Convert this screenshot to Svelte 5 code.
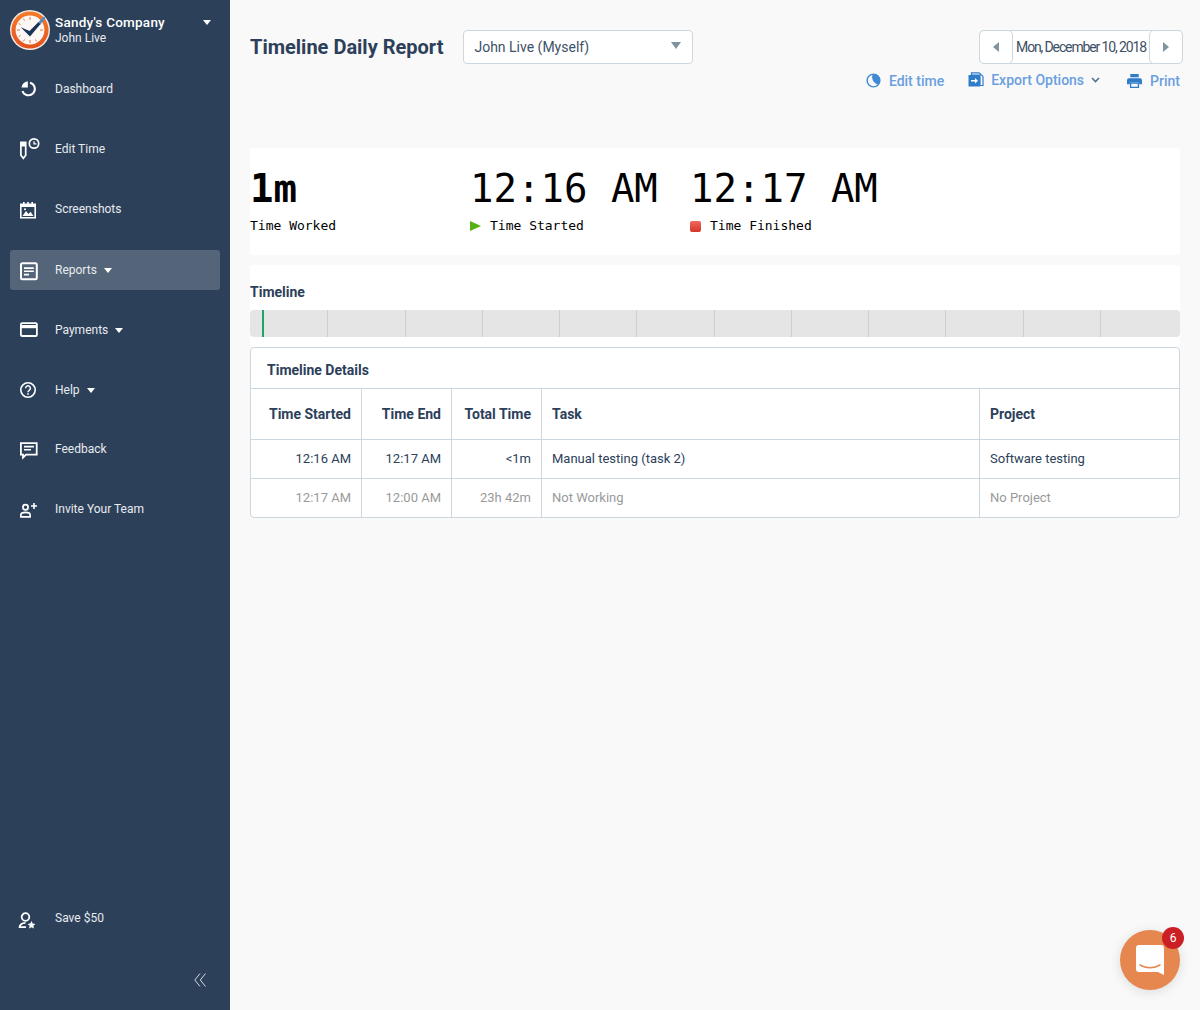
<script>
  const ticks = Array.from({ length: 12 });
  const rows = [
    { start: '12:16 AM', end: '12:17 AM', total: '<1m', task: 'Manual testing (task 2)', project: 'Software testing', muted: false },
    { start: '12:17 AM', end: '12:00 AM', total: '23h 42m', task: 'Not Working', project: 'No Project', muted: true }
  ];
</script>

<div class="page">
  <aside class="sidebar">
    <div class="brand">
      <svg class="logo" width="40" height="40" viewBox="0 0 40 40">
        <defs>
          <linearGradient id="ring" x1="0" y1="0" x2="0" y2="1">
            <stop offset="0" stop-color="#f47b2a" />
            <stop offset="1" stop-color="#e4521f" />
          </linearGradient>
        </defs>
        <circle cx="20" cy="20" r="20" fill="#f4ece6" />
        <circle cx="20" cy="20" r="18.600" fill="url(#ring)" />
        <circle cx="20" cy="20" r="14.400" fill="#fdf8f5" />
        <path d="M20 7v3M20 30v3M7 20h3M30 20h3M13.500 8.700l1 1.800M26.500 31.300l-1-1.800M8.700 26.500l1.800-1M31.300 13.500l-1.800 1M8.700 13.500l1.800 1M13.500 31.300l1-1.800" stroke="#e8743a" stroke-width="1" fill="none" />
        <path d="M10.700 17.300 L19.500 21 L28.500 12 L30.500 14 L20 26.500 Z" fill="#1c3358" />
        <path d="M28.500 12 L34 6.500 L35.500 8 L30.500 14 Z" fill="#3f8fd0" />
      </svg>
      <div class="brand-text">
        <div class="company">Sandy's Company</div>
        <div class="user">John Live</div>
      </div>
      <span class="caret brand-caret"></span>
    </div>

    <nav class="nav">
      <a class="item">
        <svg class="icon" viewBox="0 0 20 20"><path d="M8.800 2.300a7.500 7.500 0 0 0-6.300 6.200h6.300z" fill="#fff"/><path d="M11 3.700a6.400 6.400 0 1 1-7.600 8.300" fill="none" stroke="#fff" stroke-width="2"/></svg>
        <span>Dashboard</span>
      </a>
      <a class="item">
        <svg class="icon" viewBox="0 0 20 20" style="overflow:visible"><path d="M1.900 3.400h4.800v12.800L4.300 19.300 1.900 16.200z" fill="none" stroke="#fff" stroke-width="1.700"/><path d="M2 3.500h4.600v4H2z" fill="#fff"/><circle cx="15" cy="4.500" r="4.700" fill="none" stroke="#fff" stroke-width="1.700"/><path d="M15 2.300v2.500h2.400" fill="none" stroke="#fff" stroke-width="1.300"/></svg>
        <span>Edit Time</span>
      </a>
      <a class="item">
        <svg class="icon" viewBox="0 0 20 20"><path d="M1.800 6h14.400v12.800H1.800z" fill="none" stroke="#fff" stroke-width="1.600"/><path d="M1 4.500h16V8H1z" fill="#fff"/><path d="M4 3h1.600v2.500H4zM8.200 3h1.600v2.500H8.200zM12.400 3H14v2.500h-1.600z" fill="#fff"/><path d="M3.500 17l3.500-5 2.500 3 2-2.300 3 4.300z" fill="#fff"/><circle cx="6" cy="10.300" r="1" fill="#fff"/></svg>
        <span>Screenshots</span>
      </a>
      <a class="item active">
        <svg class="icon" viewBox="0 0 20 20" style="overflow:visible"><rect x="2" y="3.200" width="15.800" height="16" rx="1.500" fill="none" stroke="#fff" stroke-width="2"/><path d="M5 7.300h9.800v1.600H5zM5 10.500h9.800v1.600H5zM5 13.800h5v1.600H5z" fill="#fff"/></svg>
        <span>Reports</span><span class="caret"></span>
      </a>
      <a class="item">
        <svg class="icon" viewBox="0 0 20 20" style="overflow:visible"><rect x="1.900" y="3.200" width="16" height="12.800" rx="1.300" fill="none" stroke="#fff" stroke-width="1.800"/><path d="M2 5h15.800v3.200H2z" fill="#fff"/></svg>
        <span>Payments</span><span class="caret"></span>
      </a>
      <a class="item">
        <svg class="icon" viewBox="0 0 20 20"><circle cx="9" cy="10" r="7.200" fill="none" stroke="#fff" stroke-width="1.600"/><path d="M6.600 8.200a2.400 2.400 0 1 1 3.600 2.100c-.8.500-1.200 1-1.200 2" fill="none" stroke="#fff" stroke-width="1.500"/><path d="M8.200 13.200h1.600v1.600H8.200z" fill="#fff"/></svg>
        <span>Help</span><span class="caret"></span>
      </a>
      <a class="item feedback">
        <svg class="icon" viewBox="0 0 20 20" style="overflow:visible"><path d="M1.900 4.200h15.800v11.500H7l-3 3v-3H1.900z" fill="none" stroke="#fff" stroke-width="1.800"/><path d="M5 6.800h10v1.600H5zM5 9.900h7v1.600H5z" fill="#fff"/></svg>
        <span>Feedback</span>
      </a>
      <a class="item">
        <svg class="icon" viewBox="0 0 20 20"><circle cx="6.500" cy="8.300" r="2.600" fill="none" stroke="#fff" stroke-width="1.700"/><path d="M1.900 17.800v-2c0-1.300 2-2.400 4.600-2.400s4.600 1.100 4.600 2.400v2z" fill="none" stroke="#fff" stroke-width="1.700"/><path d="M12 6.200h2.200V4h1.600v2.200H18v1.600h-2.200V10h-1.600V7.800H12z" fill="#fff"/></svg>
        <span>Invite Your Team</span>
      </a>
    </nav>

    <div class="bottom">
      <a class="item save">
        <svg class="icon" viewBox="0 0 20 20" style="overflow:visible"><g transform="translate(-2 3.500)"><circle cx="8.500" cy="5.500" r="3.800" fill="none" stroke="#fff" stroke-width="1.800"/><path d="M2.500 16.500c0-3 2-5 6-5.200M2 15.700h7" fill="none" stroke="#fff" stroke-width="1.800"/><path d="M14.500 9.500l1.200 2.500 2.700.4-2 1.900.5 2.700-2.400-1.300-2.400 1.300.5-2.700-2-1.900 2.700-.4z" fill="#fff"/></g></svg>
        <span>Save $50</span>
      </a>
      <div class="collapse">
        <svg width="12" height="14" viewBox="0 0 12 14"><path d="M6 .5L.8 7 6 13.500M11.500.5L6.300 7l5.200 6.500" fill="none" stroke="#d5dbe2" stroke-width="1"/></svg>
      </div>
    </div>
  </aside>

  <main class="main">
    <header class="top">
      <h1>Timeline Daily Report</h1>
      <div class="select">
        <span>John Live (Myself)</span>
        <span class="select-arrow"></span>
      </div>
      <div class="date-nav">
        <button class="date-btn" aria-label="Previous day"><span class="tri left"></span></button>
        <span class="date">Mon, December 10, 2018</span>
        <button class="date-btn" aria-label="Next day"><span class="tri right"></span></button>
      </div>
    </header>

    <div class="actions">
      <a class="action edit">
        <svg width="15" height="15" viewBox="0 0 16 16"><circle cx="8" cy="8" r="6.800" fill="none" stroke="#3f8ad4" stroke-width="1.500"/><path d="M7 1.500A6.500 6.500 0 0 1 12.800 12.500 8.500 8.500 0 0 1 7 1.500z" fill="#3f8ad4"/></svg>
        <span>Edit time</span>
      </a>
      <a class="action export">
        <svg width="16" height="15" viewBox="0 0 16 15"><path d="M3.500 3V.8h7.700L15 4.400V13.500h-3V3z" fill="none" stroke="#2f7cc8" stroke-width="1.200"/><path d="M.5 3h11.500v11.500H.5z" fill="#2f7cc8"/><path d="M3 8h4V6l3 2.800-3 2.700V9.500H3z" fill="#fff"/></svg>
        <span>Export Options</span>
        <svg class="chev" width="9" height="6" viewBox="0 0 9 6"><path d="M1 1l3.500 3.500L8 1" fill="none" stroke="#55708f" stroke-width="1.600"/></svg>
      </a>
      <a class="action print">
        <svg width="15" height="14" viewBox="0 0 16 15"><path d="M3.500 0h9v3.500h-9z" fill="#2f7cc8"/><path d="M2 4.500h12a2 2 0 0 1 2 2V11h-3V9H3v2H0V6.500a2 2 0 0 1 2-2z" fill="#2f7cc8"/><path d="M3.800 9.700h8.400v4.600H3.800z" fill="none" stroke="#2f7cc8" stroke-width="1.400"/></svg>
        <span>Print</span>
      </a>
    </div>

    <section class="stats">
      <div class="stat">
        <div class="big bold">1m</div>
        <div class="label">Time Worked</div>
      </div>
      <div class="stat">
        <div class="big">12:16 AM</div>
        <div class="label"><span class="play"></span>Time Started</div>
      </div>
      <div class="stat">
        <div class="big">12:17 AM</div>
        <div class="label"><span class="stop"></span>Time Finished</div>
      </div>
    </section>

    <section class="timeline">
      <h2>Timeline</h2>
      <div class="bar">
        {#each ticks as _}
          <span class="seg"></span>
        {/each}
        <span class="marker"></span>
      </div>
    </section>

    <section class="details">
      <h3>Timeline Details</h3>
      <table>
        <colgroup>
          <col class="c1" /><col class="c2" /><col class="c3" /><col /><col class="c5" />
        </colgroup>
        <thead>
          <tr>
            <th class="r">Time Started</th>
            <th class="r">Time End</th>
            <th class="r">Total Time</th>
            <th>Task</th>
            <th>Project</th>
          </tr>
        </thead>
        <tbody>
          {#each rows as row}
            <tr class:muted={row.muted}>
              <td class="r">{row.start}</td>
              <td class="r">{row.end}</td>
              <td class="r">{row.total}</td>
              <td>{row.task}</td>
              <td>{row.project}</td>
            </tr>
          {/each}
        </tbody>
      </table>
    </section>
  </main>

  <div class="chat">
    <svg width="30" height="32" viewBox="0 0 30 32"><path d="M4 1h22a3 3 0 0 1 3 3v27l-6-3H4a3 3 0 0 1-3-3V4a3 3 0 0 1 3-3z" fill="#fff"/><path d="M5 21c6 3.500 14 3.500 20 0" fill="none" stroke="#e5874f" stroke-width="1.500" stroke-linecap="round"/></svg>
    <span class="badge">6</span>
  </div>
</div>

<style>
  :global(body) {
    margin: 0;
    background: #f9f9f9;
  }
  .page {
    display: flex;
    position: relative;
    width: 1200px;
    height: 1010px;
    overflow: hidden;
    font-family: Roboto, "Liberation Sans", sans-serif;
    color: #2c405a;
  }
  .sidebar {
    flex: 0 0 230px;
    display: flex;
    flex-direction: column;
    background: #2c405a;
    color: #e8ebef;
    box-sizing: border-box;
    padding: 10px 10px 0;
  }
  .brand {
    display: flex;
    align-items: center;
    height: 40px;
  }
  .logo {
    flex: none;
    margin-right: 5px;
  }
  .company {
    font-size: 13.500px;
    line-height: 16px;
    font-weight: 500;
    color: #fff;
    letter-spacing: .23px;
  }
  .user {
    font-size: 12px;
    line-height: 16px;
  }
  .caret {
    display: inline-block;
    width: 0;
    height: 0;
    margin-left: 7px;
    border-left: 4px solid transparent;
    border-right: 4px solid transparent;
    border-top: 5px solid #fff;
  }
  .brand-caret {
    align-self: flex-start;
    margin-left: auto;
    margin-right: 9px;
    margin-top: 10px;
  }
  .nav {
    display: flex;
    flex-direction: column;
    gap: 20px;
    margin-top: 19px;
  }
  .item {
    display: flex;
    align-items: center;
    height: 40px;
    border-radius: 3px;
    padding-left: 9px;
    font-size: 12px;
  }
  .item .icon {
    flex: none;
    width: 20px;
    height: 20px;
    margin-right: 16px;
  }
  .active {
    background: #556579;
    margin-top: 1px;
  }
  .feedback {
    margin-top: -1px;
  }
  .bottom {
    margin-top: auto;
  }
  .save {
    margin-bottom: 32px;
  }
  .collapse {
    display: flex;
    justify-content: flex-end;
    padding-right: 14px;
    height: 20px;
    margin-bottom: 20px;
    align-items: center;
  }
  .main {
    flex: 1;
    min-width: 0;
    box-sizing: border-box;
    padding: 30px 20px 0;
  }
  .top {
    display: flex;
    align-items: center;
    height: 34px;
    margin-right: -3px;
  }
  h1 {
    margin: 0 20px 0 0;
    font-size: 20px;
    font-weight: 700;
    color: #2c405a;
    white-space: nowrap;
  }
  .select {
    box-sizing: border-box;
    width: 230px;
    height: 34px;
    display: flex;
    align-items: center;
    justify-content: space-between;
    padding: 0 11px 0 10px;
    background: #fff;
    border: 1px solid #cdd8de;
    border-radius: 4px;
    font-size: 14px;
    color: #3d5168;
  }
  .select-arrow {
    width: 0;
    height: 0;
    border-left: 5px solid transparent;
    border-right: 5px solid transparent;
    border-top: 7px solid #7f949f;
    margin-top: -3px;
  }
  .date-nav {
    margin-left: auto;
    display: flex;
    align-items: center;
    width: 204px;
    height: 34px;
    box-sizing: border-box;
    border: 1px solid #cdd8de;
    border-radius: 5px;
    background: #fff;
  }
  .date-btn {
    flex: none;
    width: 34px;
    height: 34px;
    margin: -1px;
    padding: 0;
    display: flex;
    align-items: center;
    justify-content: center;
    background: #fff;
    border: 1px solid #cdd8de;
    border-radius: 5px;
  }
  .date {
    flex: 1;
    text-align: center;
    font-size: 14px;
    letter-spacing: -1.130px;
    white-space: nowrap;
    color: #3d4f63;
  }
  .tri {
    width: 0;
    height: 0;
    border-top: 5px solid transparent;
    border-bottom: 5px solid transparent;
  }
  .tri.left {
    border-right: 6px solid #7f949f;
    margin-left: -1px;
  }
  .tri.right {
    border-left: 6px solid #7f949f;
    margin-left: -1px;
  }
  .actions {
    display: flex;
    justify-content: flex-end;
    align-items: center;
    height: 20px;
    margin-top: 6px;
    font-size: 14px;
    font-weight: 500;
    color: #6a9fe0;
  }
  .action {
    display: flex;
    align-items: center;
    gap: 8px;
  }
  .edit {
    margin-right: 24px;
    margin-top: 1px;
  }
  .export {
    margin-right: 27px;
    margin-top: -1px;
    gap: 7px;
  }
  .print {
    margin-top: 1px;
  }
  .stats {
    display: grid;
    grid-template-columns: 220px 220px 1fr;
    height: 107px;
    margin-top: 58px;
    background: #fff;
    border-radius: 4px;
    color: #000;
    font-family: "DejaVu Sans Mono", "Liberation Mono", monospace;
  }
  .big {
    font-size: 39px;
    line-height: 46px;
    margin-top: 18px;
    white-space: nowrap;
  }
  .bold {
    font-weight: 700;
  }
  .label {
    display: flex;
    align-items: center;
    font-size: 13px;
    line-height: 16px;
    margin-top: 6px;
  }
  .play {
    width: 0;
    height: 0;
    margin-right: 9px;
    border-top: 5.500px solid transparent;
    border-bottom: 5.500px solid transparent;
    border-left: 11px solid #55b013;
  }
  .stop {
    width: 11px;
    height: 11px;
    margin-right: 9px;
    border-radius: 2px;
    background: linear-gradient(#f0685c, #d5362b);
  }
  .timeline {
    margin-top: 10px;
    padding-top: 18px;
    background: #fff;
    border-radius: 4px 4px 0 0;
    height: 82px;
    box-sizing: border-box;
  }
  h2 {
    margin: 0 0 9px;
    font-size: 14px;
    line-height: 18px;
    font-weight: 700;
    color: #2c405a;
  }
  .bar {
    position: relative;
    display: flex;
    height: 27px;
    padding-left: 1px;
    background: #e5e5e5;
    border-radius: 4px;
    overflow: hidden;
  }
  .seg {
    flex: 0 0 77.250px;
    box-sizing: border-box;
    border-right: 1px solid #cfcfcf;
  }
  .seg:nth-child(12) {
    border-right: 0;
  }
  .marker {
    position: absolute;
    left: 12px;
    top: 0;
    bottom: 0;
    width: 2px;
    background: #1fa463;
  }
  .details {
    background: #fff;
    border: 1px solid #cdd8de;
    border-radius: 4px;
    overflow: hidden;
  }
  h3 {
    margin: 0;
    height: 40px;
    box-sizing: border-box;
    padding: 13px 16px 0;
    font-size: 14px;
    line-height: 18px;
    font-weight: 700;
    color: #2c405a;
  }
  table {
    width: 100%;
    border-collapse: separate;
    border-spacing: 0;
    table-layout: fixed;
    font-size: 13px;
    color: #2c405a;
  }
  .c1 { width: 110px; }
  .c2 { width: 90px; }
  .c3 { width: 90px; }
  .c5 { width: 200px; }
  th, td {
    box-sizing: border-box;
    border-top: 1px solid #cdd8de;
    border-left: 1px solid #cdd8de;
    padding: 0 10px;
    text-align: left;
    white-space: nowrap;
  }
  th:first-child, td:first-child {
    border-left: 0;
  }
  th {
    height: 51px;
    font-size: 14px;
    font-weight: 700;
  }
  td {
    height: 39px;
    padding-bottom: 2px;
  }
  .r {
    text-align: right;
  }
  .muted td {
    color: #9a9a9a;
  }
  .chat {
    position: absolute;
    left: 1120px;
    top: 930px;
    width: 60px;
    height: 60px;
    display: flex;
    align-items: center;
    justify-content: center;
    border-radius: 50%;
    background: #e5874f;
    box-shadow: 0 2px 12px rgba(0, 0, 0, .12);
  }
  .badge {
    position: absolute;
    right: -4px;
    top: -3px;
    width: 22px;
    height: 22px;
    display: flex;
    align-items: center;
    justify-content: center;
    border-radius: 50%;
    background: #cc2027;
    color: #fff;
    font-size: 12px;
  }
</style>
